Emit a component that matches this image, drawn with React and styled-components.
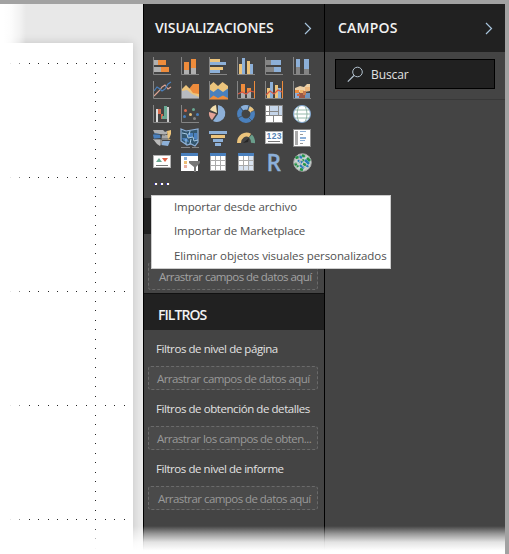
import React from 'react';
import styled, { createGlobalStyle } from 'styled-components';

const Global = createGlobalStyle`
  * { box-sizing: border-box; }
  body { margin: 0; background: #fff; overflow: hidden; font-family: "Open Sans", "Noto Sans", sans-serif; }
`;

const Window = styled.div`
  position: relative;
  width: 509px;
  height: 554px;
  overflow: hidden;
  display: flex;
  background: #e8e8e8;
  border-top: 4px solid #a2a2a2;
  border-right: 4px solid #a2a2a2;
`;
const Canvas = styled.main`
  width: 143px;
  padding-top: 39px;
  flex: none;
`;
const Page = styled.div`
  width: 133px;
  height: 511px;
  background: #fff;
  box-shadow: 0 0 9px rgba(0, 0, 0, 0.16);
`;
const Panel = styled.section`
  width: ${(p) => p.$width}px;
  flex: none;
  background: #444;
  border-left: 1px solid #000;
`;
const Header = styled.header`
  height: 48px;
  padding: 0 12px 0 ${(p) => p.$inset}px;
  display: flex;
  align-items: center;
  justify-content: space-between;
  background: #212121;
`;
const Label = styled.span`
  display: block;
  white-space: nowrap;
  font-size: ${(p) => p.$size || 11.5}px;
  font-weight: ${(p) => p.$weight || 400};
  line-height: 16px;
  letter-spacing: ${(p) => p.$track || 0}px;
  color: ${(p) => p.$color || '#e2e2e2'};
`;
const Gallery = styled.div`
  display: grid;
  grid-template-columns: repeat(6, 28px);
  grid-auto-rows: 24px;
  padding: 5px 0 0 9px;
  height: 146px;
`;
const Glyph = styled.svg`
  display: block;
  width: 18px;
  height: 18px;
  overflow: visible;
`;
const More = styled.div`
  display: flex;
  gap: 3px;
  padding: 6px 0 0 1px;
`;
const Dot = styled.i`
  width: 3px;
  height: 2px;
  background: #fff;
  border-left: 1px solid #3c3cb0;
  box-shadow: 1px 0 #6b5238;
`;
const SectionBar = styled.div`
  height: 36px;
  padding: 5px 0 0 14px;
  display: flex;
  align-items: center;
  background: #212121;
`;
const Values = styled.div`
  height: 60px;
  padding: 28px 6px 0 4px;
  border-bottom: 1px solid #111;
`;
const Filters = styled.div`
  padding: 11px 6px 0 4px;
`;
const Filter = styled.div`
  height: 60px;
  display: flex;
  flex-direction: column;
  gap: 9px;
`;
const FilterName = styled.div`
  height: 16px;
  padding-left: ${(p) => p.$inset}px;
`;
const DropZone = styled.div`
  height: ${(p) => p.$height || 24}px;
  padding-left: ${(p) => p.$inset}px;
  padding-top: ${(p) => p.$drop || 2}px;
  display: flex;
  align-items: center;
  border: 1px dashed #6a6a6a;
  border-radius: 3px;
  background: #4a4a4a;
`;
const SearchArea = styled.div`
  height: 48px;
  padding: 7px 10px;
  border-bottom: 1px solid #383838;
`;
const SearchBox = styled.div`
  height: 30px;
  padding: 1px 0 0 11px;
  display: flex;
  align-items: center;
  gap: 7px;
  border: 1px solid #000;
  background: #212121;
`;
const SearchIcon = styled.svg`
  width: 17px;
  height: 17px;
  flex: none;
`;
const Chevron = styled.svg`
  width: 8px;
  height: 13px;
`;
const Menu = styled.div`
  position: absolute;
  left: 151px;
  top: 191px;
  width: 240px;
  height: 74px;
  padding: 3px 0 0 22px;
  border: 1px solid #ccc;
  background: #fff;
`;
const MenuItem = styled.div`
  height: 24.3px;
  padding-left: ${(p) => p.$inset || 0}px;
`;
const LeftFade = styled.div`
  position: absolute;
  left: 0;
  top: -4px;
  width: 26px;
  height: 554px;
  background: linear-gradient(90deg, #fff 14%, rgba(255, 255, 255, 0.88) 42%, rgba(255, 255, 255, 0.5) 74%, rgba(255, 255, 255, 0));
`;
const TopEdge = styled.div`
  position: absolute;
  left: 0;
  right: 0;
  top: -4px;
  height: 4px;
  background: linear-gradient(90deg, #fff 4px, #d8d8d8 16px, #a2a2a2 25px);
`;
const BottomFade = styled.div`
  position: absolute;
  left: 0;
  right: -4px;
  bottom: 0;
  height: 28px;
  background: linear-gradient(rgba(255, 255, 255, 0), rgba(255, 255, 255, 0.45) 28%, rgba(255, 255, 255, 0.85) 58%, #fff 88%);
`;

const O = '#ee8c3c', G = '#b0b0b0', Y = '#ecc47c', B = '#8db0d8', D = '#4a80bd', K = '#858585';

const Bar = ({ d }) => d.map(([x, y, w, h, f], i) => <rect key={i} x={x} y={y} width={w} height={h} fill={f} shapeRendering="crispEdges" />);
const Axis = () => <path d="M.5 0V17.5H18" fill="none" stroke={K} />;

const icons = [
  <><Bar d={[[1, 3, 4, 5, G], [5, 3, 8, 5, O], [1, 10, 7, 5, G], [8, 10, 8, 5, O]]} /><Axis /></>,
  <><Bar d={[[3, 5, 5, 8, O], [3, 13, 5, 4, G], [10, 2, 5, 9, O], [10, 11, 5, 6, G]]} /><Axis /></>,
  <><Bar d={[[1, 2, 10, 3, Y], [1, 5, 16, 3, B], [1, 10, 13, 3, Y], [1, 13, 10, 3, B]]} /><Axis /></>,
  <><Bar d={[[2, 7, 3, 10, Y], [5, 1, 3, 16, B], [10, 4, 3, 13, Y], [13, 7, 3, 10, B]]} /><Axis /></>,
  <><Bar d={[[1, 3, 5, 5, K], [6, 3, 10, 5, B], [1, 10, 8, 5, K], [9, 10, 7, 5, B]]} /><Axis /></>,
  <><Bar d={[[3, 2, 4, 8, B], [3, 10, 4, 7, K], [11, 2, 5, 10, B], [11, 12, 5, 5, K]]} /><Axis /></>,

  <><path d="M1 15L4 12 7 9 9 6 12 4 15 8 18 6" fill="none" stroke="#dda595" strokeWidth="1.1" /><path d="M1 10L4 6 7 8 9 10 12 8 15 3 18 1" fill="none" stroke={D} strokeWidth="1.1" /><Axis /></>,
  <><path d="M1 11L8 8 12 3H18V17H1Z" fill={O} /><path d="M1 8L5 4 9 8 12 12 18 13V17H1Z" fill={Y} /><path d="M1 10L6 9 11 13 18 16V17H1Z" fill="#b8bbc0" /><Axis /></>,
  <><path d="M0 5L4.500 1 9 5 13.500 1 19 5V18H0Z" fill={Y} /><path d="M0 8L4.500 11 9 7.500 14 11 19 7.500V18H0Z" fill={D} /><path d="M0 18L4.500 14.500 9 17 14 14.500 19 17V18.500H0Z" fill={O} /><path d="M.5 0V18" stroke={K} /></>,
  <><Bar d={[[4, 3, 4, 9, O], [4, 12, 4, 5, G], [10, 7, 4, 5, O], [10, 11, 4, 6, G], [17, 0, 1, 18, O]]} /><path d="M1 13L5 11 9 13 13 10 17 11" fill="none" stroke="#d85842" strokeWidth="1.2" /><Axis /></>,
  <><Bar d={[[2, 7, 3, 10, Y], [5, 1, 3, 16, B], [10, 4, 3, 13, Y], [13, 7, 3, 10, B], [17, 0, 1, 18, O]]} /><path d="M1 14L5 10 9 13 13 9 17 11" fill="none" stroke="#d85842" strokeWidth="1.2" /><Axis /></>,
  <><path d="M2 7L7 5 11 6 14 3H17V10L11 11 2 12Z" fill="#ecd0a7" /><Bar d={[[2, 9, 4, 3, O], [7, 9, 4, 3, '#f2b96e'], [12, 6, 5, 4, '#edb77d'], [2, 12, 4, 5, B], [6, 12, 6, 5, '#9b5946'], [12, 12, 5, 5, '#6e94bd'], [4, 13, 3, 2, '#d36846'], [10, 10, 3, 4, '#c67b50']]} /><Axis /></>,

  <><Bar d={[[3, 4, 2, 13, '#ddd'], [5, 4, 3, 5, '#d86b4e'], [8, 9, 2, 5, '#d86b4e'], [9, 11, 3, 3, '#6aa892'], [11, 1, 3, 13, '#6aa892'], [14, 2, 2, 15, '#ccc']]} /><Axis /></>,
  <><g><circle cx="4.500" cy="5.500" r="1.500" fill="#d86b4e" /><circle cx="12.500" cy="4.500" r="1.500" fill="#6aa892" /><circle cx="9.500" cy="9.500" r="1.500" fill={Y} /><circle cx="16.500" cy="9.500" r="1.500" fill={D} /><circle cx="3.500" cy="11.500" r="1.500" fill={D} /><circle cx="13.500" cy="13.500" r="1.500" fill={K} /></g><Axis /></>,
  <><path d="M9 9L9 0A8.500 8.500 0 1 1 4 16Z" fill={B} /><path d="M8 8L7 0A9 9 0 0 0 1 5Z" fill="#f4dfae" /><path d="M7 9L0 7A9 9 0 0 0 3 15Z" fill="#e5a296" /></>,
  <g fill="none" strokeWidth="4.500"><circle cx="9" cy="9" r="6.700" stroke={D} /><path d="M5 3.500A6.700 6.700 0 0 1 11 2.700" stroke={B} /><path d="M12 3.200A6.700 6.700 0 0 1 15.300 6.500" stroke={Y} /><path d="M3 2L6 6M11.800 1L11 5M14 7L18 5M1 13L5 11M12 13L15 16" stroke="#444" strokeWidth=".7" /></g>,
  <><Bar d={[[0, 0, 18, 18, '#888'], [1, 1, 3, 5, '#fff'], [5, 1, 8, 5, '#c5d5e9'], [14, 1, 3, 9, '#c5d5e9'], [1, 7, 3, 3, '#fff'], [5, 7, 8, 3, '#c5d5e9'], [1, 11, 7, 6, '#fff'], [9, 11, 8, 6, '#fff']]} /></>,
  <><circle cx="9" cy="9" r="8.500" fill="#fff" stroke="#7da4cf" /><path d="M2 5H16M1 9H17M2 13H16M6 1Q2 9 6 17M12 1Q16 9 12 17" fill="none" stroke="#8bb0a2" strokeWidth=".9" /></>,

  <><path d="M0 1H10L12 3 14 2V5L11 6 2 5Z" fill={G} /><path d="M0 6L2 4 7 5 8 9 1 10Z" fill={D} /><path d="M9 6H15V11H8Z" fill="#a7a7a7" /><path d="M0 10L8 10 10 13 7 17 4 15Z" fill="#bbb" /><path d="M10 12H17L15 17 8 16Z" fill={B} /><path d="M14 2L18 1V5L16 10 18 11H15Z" fill={Y} /><path d="M1 5L12 6M8 5V17M1 10H16" stroke="#444" strokeWidth=".7" /></>,
  <><path d="M0 0L5 2 11 1 17 0V13L14 17 10 15 6 16 0 12Z" fill="#33576f" stroke={B} strokeWidth="1.2" /><path d="M7 4H12V8H7ZM1 9H6L8 13 3 12ZM13 4H16V11L13 10Z" fill={D} /><path d="M1 4L6 5 7 9 12 8 13 12 17 11M9 2L8 6M5 10V15M10 10L9 15" stroke="#a8cae5" fill="none" /><path d="M0 18.500H9M11 18.500H18" stroke={K} /></>,
  <Bar d={[[0, 2, 18, 3, B], [2, 6, 14, 3, Y], [4, 10, 10, 3, B], [6, 14, 6, 3, B]]} />,
  <><g fill="none" strokeWidth="4"><path d="M2 14A7.500 8.500 0 0 1 13 6.500" stroke={Y} /><path d="M13.500 7A7.500 8.500 0 0 1 16 14" stroke="#6a9e8b" /></g><path d="M6 14L12 9 11 13Z" fill="#262626" /></>,
  <><rect x=".5" y="2.500" width="17" height="12" fill="#fff" stroke={G} /><text x="1.600" y="10" fontSize="8.500" fontWeight="700" fontFamily="Liberation Sans" fill="#5383b5" textLength="15">123</text><path d="M3 12.500H15" stroke="#777" /></>,
  <><Bar d={[[0, 0, 18, 18, '#888'], [1, 1, 16, 16, '#fff'], [2, 2, 3, 14, '#aaa'], [7, 2, 6, 1, B], [7, 5, 3, 1, '#999'], [7, 8, 6, 2, B], [7, 11, 5, 1, B], [7, 14, 3, 1, '#999']]} /></>,

  <><rect x=".5" y="2.500" width="17" height="12" fill="#fff" stroke={G} /><path d="M3 9L6 5 9 9Z" fill="#6aa892" /><path d="M9 5H15L12 9Z" fill="#df6147" /><path d="M3 12.500H15" stroke="#777" /></>,
  <><Bar d={[[0, 0, 17, 18, '#fff'], [0, 0, 17, 3, D], [3, 4, 3, 3, B], [3, 8, 3, 3, '#eebf75'], [3, 12, 3, 3, '#eab0a3']]} /><path d="M8 8H19V10L15 14V19H13V14L8 10Z" fill="#777" /></>,
  <><Bar d={[[1, 0, 16, 18, '#aaa'], [1, 0, 16, 3, D], ...[0, 1, 2].flatMap((r) => [0, 1, 2].map((c) => [2 + c * 5, 3 + r * 5, 4, 4, '#fff']))]} /></>,
  <><Bar d={[[1, 0, 16, 18, '#aaa'], [1, 0, 16, 3, D], ...[0, 1, 2].flatMap((r) => [0, 1, 2].map((c) => [2 + c * 5, 3 + r * 5, 4, 4, c === 2 || r === 2 ? '#d8e3f1' : '#fff']))]} /></>,
  <text x="1.500" y="17.500" fontSize="24" fontFamily="Open Sans" fontWeight="600" fill={B} stroke={B} strokeWidth=".3" textLength="14.500" lengthAdjust="spacingAndGlyphs">R</text>,
  <><circle cx="9.500" cy="9.500" r="8.800" fill="#c9d6d2" stroke="#aaa" /><path d="M2.500 5L6 4M9 2L12 4M14 5L17 8M2 10L5 14M10 11L13 12M7 16L10 17M9 7L11 8" stroke="#249447" strokeWidth="2.600" /><path d="M6 3L9 5M5 7L9 10M12 7L16 11M7 12L11 15M14 14L15 12" stroke="#287db8" strokeWidth="2.600" /><path d="M2 7Q8 4 17 14M3 14Q7 6 14 3M6 1Q5 9 13 17M1 10Q8 9 14 16" fill="none" stroke="#c4c4c4" strokeWidth=".8" /></>,
];

const dots = [];
for (let r = 0; r < 5; r++) for (let c = 0; c < 13; c++) dots.push([Math.floor(10 + c * 9.5), 20 + r * 114]);
for (let n = 1; n < 52; n++) if (n % 12) dots.push([95, Math.floor(20.5 + n * 9.5)]);

const Arrow = () => (
  <Chevron viewBox="0 0 8 13"><path d="M1 1L6.500 6.500 1 12" fill="none" stroke="#a8c4dc" strokeWidth="1.200" /></Chevron>
);

export default function App() {
  return (
    <>
      <Global />
      <Window>
        <Canvas>
          <Page>
            <svg width="133" height="511" shapeRendering="crispEdges">
              {dots.map(([x, y], i) => <rect key={i} x={x} y={y} width="1" height="1" fill="#222" />)}
            </svg>
          </Page>
        </Canvas>
        <Panel $width={181}>
          <Header $inset={11}>
            <Label $size={14} $weight={600} $track={-0.1} $color="#f2f2f2">VISUALIZACIONES</Label>
            <Arrow />
          </Header>
          <Gallery>
            {icons.map((icon, i) => <Glyph key={i} viewBox="0 0 18 18">{icon}</Glyph>)}
            <More><Dot /><Dot /><Dot /></More>
          </Gallery>
          <SectionBar />
          <Values>
            <DropZone $height={28} $inset={10} $drop={1}><Label $color="#a3a3a3" $track={-0.55}>Arrastrar campos de datos aquí</Label></DropZone>
          </Values>
          <SectionBar><Label $size={14} $weight={600} $track={-0.95} $color="#f2f2f2">FILTROS</Label></SectionBar>
          <Filters>
            <Filter>
              <FilterName $inset={8}><Label $track={-0.43}>Filtros de nivel de página</Label></FilterName>
              <DropZone $inset={8}><Label $color="#999" $track={-0.55}>Arrastrar campos de datos aquí</Label></DropZone>
            </Filter>
            <Filter>
              <FilterName $inset={8}><Label $track={-0.43}>Filtros de obtención de detalles</Label></FilterName>
              <DropZone $inset={8}><Label $color="#999" $track={-0.55}>Arrastrar los campos de obten...</Label></DropZone>
            </Filter>
            <Filter>
              <FilterName $inset={8}><Label $track={-0.44}>Filtros de nivel de informe</Label></FilterName>
              <DropZone $inset={9}><Label $color="#999" $track={-0.55}>Arrastrar campos de datos aquí</Label></DropZone>
            </Filter>
          </Filters>
        </Panel>
        <Panel $width={181}>
          <Header $inset={13}>
            <Label $size={14} $weight={600} $track={0.2} $color="#f2f2f2">CAMPOS</Label>
            <Arrow />
          </Header>
          <SearchArea>
            <SearchBox>
              <SearchIcon viewBox="0 0 17 17"><circle cx="10.500" cy="6" r="4.800" fill="none" stroke="#b4c3d0" /><path d="M7 9.500L.8 15.700" stroke="#b4c3d0" strokeWidth="1.200" /></SearchIcon>
              <Label $size={12} $track={-0.1}>Buscar</Label>
            </SearchBox>
          </SearchArea>
        </Panel>
        <Menu>
          <MenuItem><Label $color="#505050" $track={-0.11}>Importar desde archivo</Label></MenuItem>
          <MenuItem><Label $color="#505050" $track={-0.1}>Importar de Marketplace</Label></MenuItem>
          <MenuItem><Label $color="#505050" $track={-0.09}>Eliminar objetos visuales personalizados</Label></MenuItem>
        </Menu>
        <LeftFade />
        <TopEdge />
        <BottomFade />
      </Window>
    </>
  );
}
